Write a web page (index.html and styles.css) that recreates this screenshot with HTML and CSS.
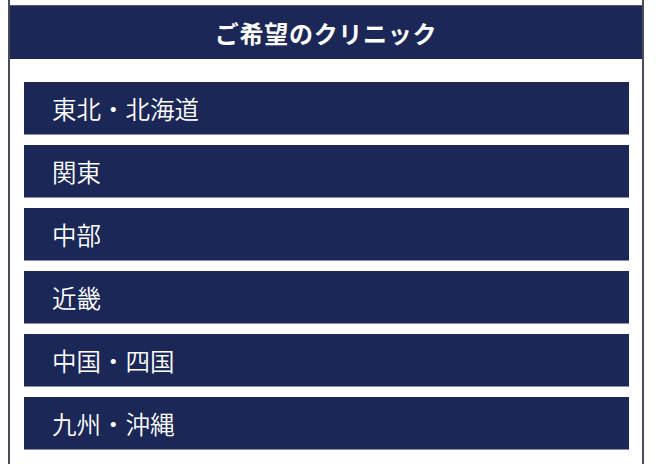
FILE: index.html
```html
<!DOCTYPE html>
<html lang="ja">
<head>
<meta charset="utf-8">
<link rel="stylesheet" href="styles.css">
</head>
<body>
<div class="panel">
  <div class="top"></div>
  <h2 class="title">ご希望のクリニック</h2>
  <ul class="list">
    <li class="item">東北・北海道</li>
    <li class="item">関東</li>
    <li class="item">中部</li>
    <li class="item">近畿</li>
    <li class="item">中国・四国</li>
    <li class="item">九州・沖縄</li>
  </ul>
</div>
</body>
</html>
```
FILE: styles.css
```css
html, body {
  margin: 0;
  padding: 0;
  background: #ffffff;
}
body {
  font-family: "Noto Sans CJK JP", "Noto Sans", sans-serif;
  height: 464px;
  overflow: hidden;
}
.panel {
  margin-left: 8px;
  width: 632px;
  border-left: 2px solid #4a4d57;
  border-right: 2px solid #4a4d57;
  min-height: 470px;
  background: #fff;
}
.top {
  height: 5px;
  border-bottom: 1px solid #5a5d68;
}
.title {
  margin: 0;
  height: 53px;
  background: #1b2757;
  color: #fff;
  font-size: 24px;
  font-weight: 700;
  display: flex;
  align-items: center;
  justify-content: center;
  letter-spacing: 0.7px;
}
.list {
  list-style: none;
  margin: 0;
  padding: 23px 13px 0 14px;
  display: flex;
  flex-direction: column;
  gap: 10px;
}
.item {
  height: 53px;
  background: #1b2757;
  color: #fff;
  font-size: 24.5px;
  font-weight: 350;
  display: flex;
  align-items: center;
  padding-left: 28px;
  box-sizing: border-box;
  border-bottom: 1px solid #8a90a8;
}
```
